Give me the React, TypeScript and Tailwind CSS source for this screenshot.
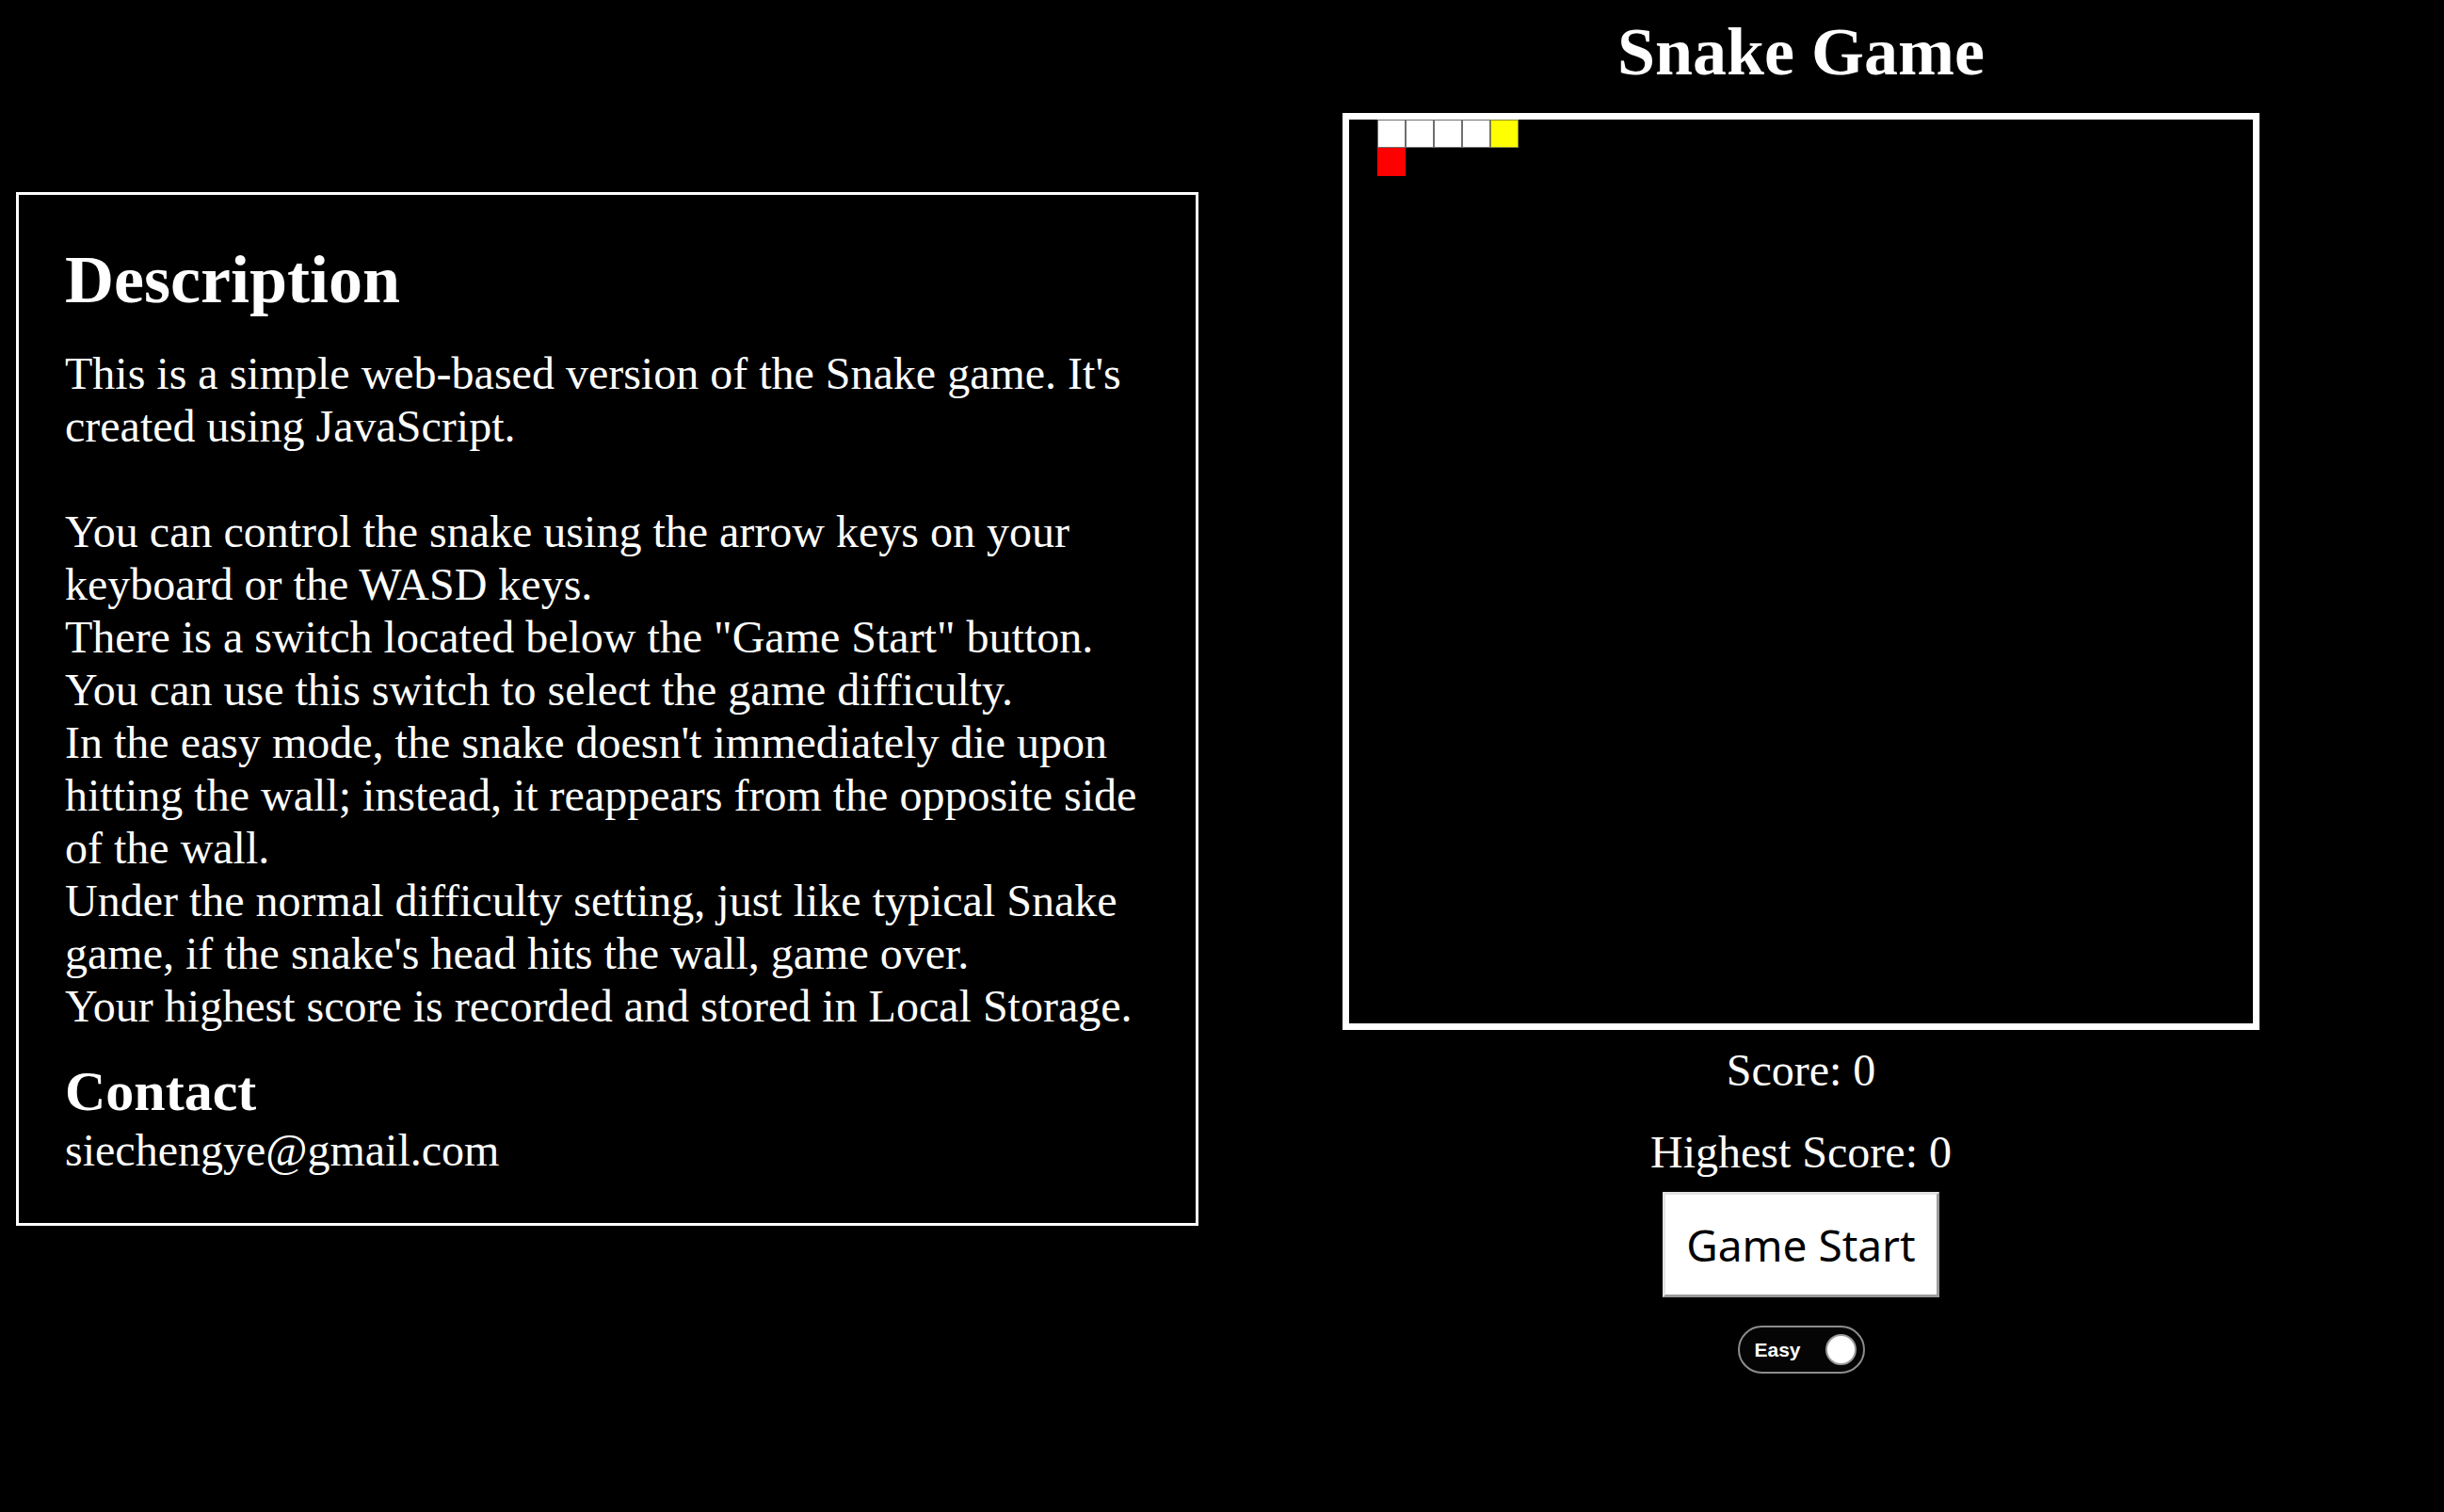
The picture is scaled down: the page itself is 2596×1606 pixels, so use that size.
import React from "react";

const serif = "font-['Liberation_Serif','Times_New_Roman',serif]";

type Cell = { x: number; y: number; color: "body" | "head" | "food" };

// snake starts along the top row, head on the right, food just below the tail
const cells: Cell[] = [
  { x: 1, y: 0, color: "body" },
  { x: 2, y: 0, color: "body" },
  { x: 3, y: 0, color: "body" },
  { x: 4, y: 0, color: "body" },
  { x: 5, y: 0, color: "head" },
  { x: 1, y: 1, color: "food" },
];

const cellClass = {
  body: "bg-white border border-[#6f6f6f]",
  head: "bg-[#ffff00] border border-[#8a8a3a]",
  food: "bg-[#ff0000]",
};

function Board() {
  return (
    <div className="relative w-[974px] h-[974px] border-[7px] border-white bg-black">
      {cells.map((c, i) => (
        <div
          key={i}
          className={`absolute w-[30px] h-[30px] ${cellClass[c.color]}`}
          style={{ left: c.x * 30, top: c.y * 30 }}
        />
      ))}
    </div>
  );
}

function DifficultySwitch() {
  return (
    <div className="flex items-center justify-between w-[135px] h-[51px] rounded-full border-2 border-[#8c8c8c] bg-[#050505] pl-[16px] pr-[7px]">
      <span className="font-['Liberation_Sans',Arial,sans-serif] font-bold text-[21px] text-white leading-none">
        Easy
      </span>
      <span className="w-[33px] h-[33px] rounded-full bg-white border-2 border-[#9a9a9a]" />
    </div>
  );
}

export default function App() {
  return (
    <div className={`w-[2596px] h-[1606px] bg-black text-white flex items-start ${serif}`}>
      {/* Description panel */}
      <div className="ml-[17px] mt-[204px] w-[1256px] border-[3px] border-white px-[49px] pt-[49px] pb-[49px]">
        <h2 className="text-[72px] font-bold leading-[83px] mb-[30px]">Description</h2>
        <p className="text-[48px] leading-[56px]">
          This is a simple web-based version of the Snake game. It's created using JavaScript.
          <br />
          <br />
          You can control the snake using the arrow keys on your keyboard or the WASD keys.
          <br />
          There is a switch located below the "Game Start" button.
          <br />
          You can use this switch to select the game difficulty.
          <br />
          In the easy mode, the snake doesn't immediately die upon hitting the wall; instead, it
          reappears from the opposite side of the wall.
          <br />
          Under the normal difficulty setting, just like typical Snake game, if the snake's head
          hits the wall, game over.
          <br />
          Your highest score is recorded and stored in Local Storage.
        </p>
        <h3 className="text-[60px] font-bold leading-[69px] mt-[28px]">Contact</h3>
        <p className="text-[48px] leading-[56px]">siechengye@gmail.com</p>
      </div>

      {/* Game column */}
      <div className="ml-[153px] w-[974px] pt-[14px] flex flex-col items-center">
        <h1 className="text-[72px] font-bold leading-[83px] mb-[23px]">Snake Game</h1>
        <Board />
        <p className="text-[48px] leading-[55px] mt-[15px]">Score: 0</p>
        <p className="text-[48px] leading-[55px] mt-[32px]">Highest Score: 0</p>
        <button className="mt-[15px] w-[294px] h-[112px] bg-white text-black border-[3px] border-t-[#e3e3e3] border-l-[#e3e3e3] border-b-[#9a9a9a] border-r-[#9a9a9a] font-['Noto_Sans',Tahoma,sans-serif] text-[46px] leading-none">
          Game Start
        </button>
        <div className="mt-[30px]">
          <DifficultySwitch />
        </div>
      </div>
    </div>
  );
}
